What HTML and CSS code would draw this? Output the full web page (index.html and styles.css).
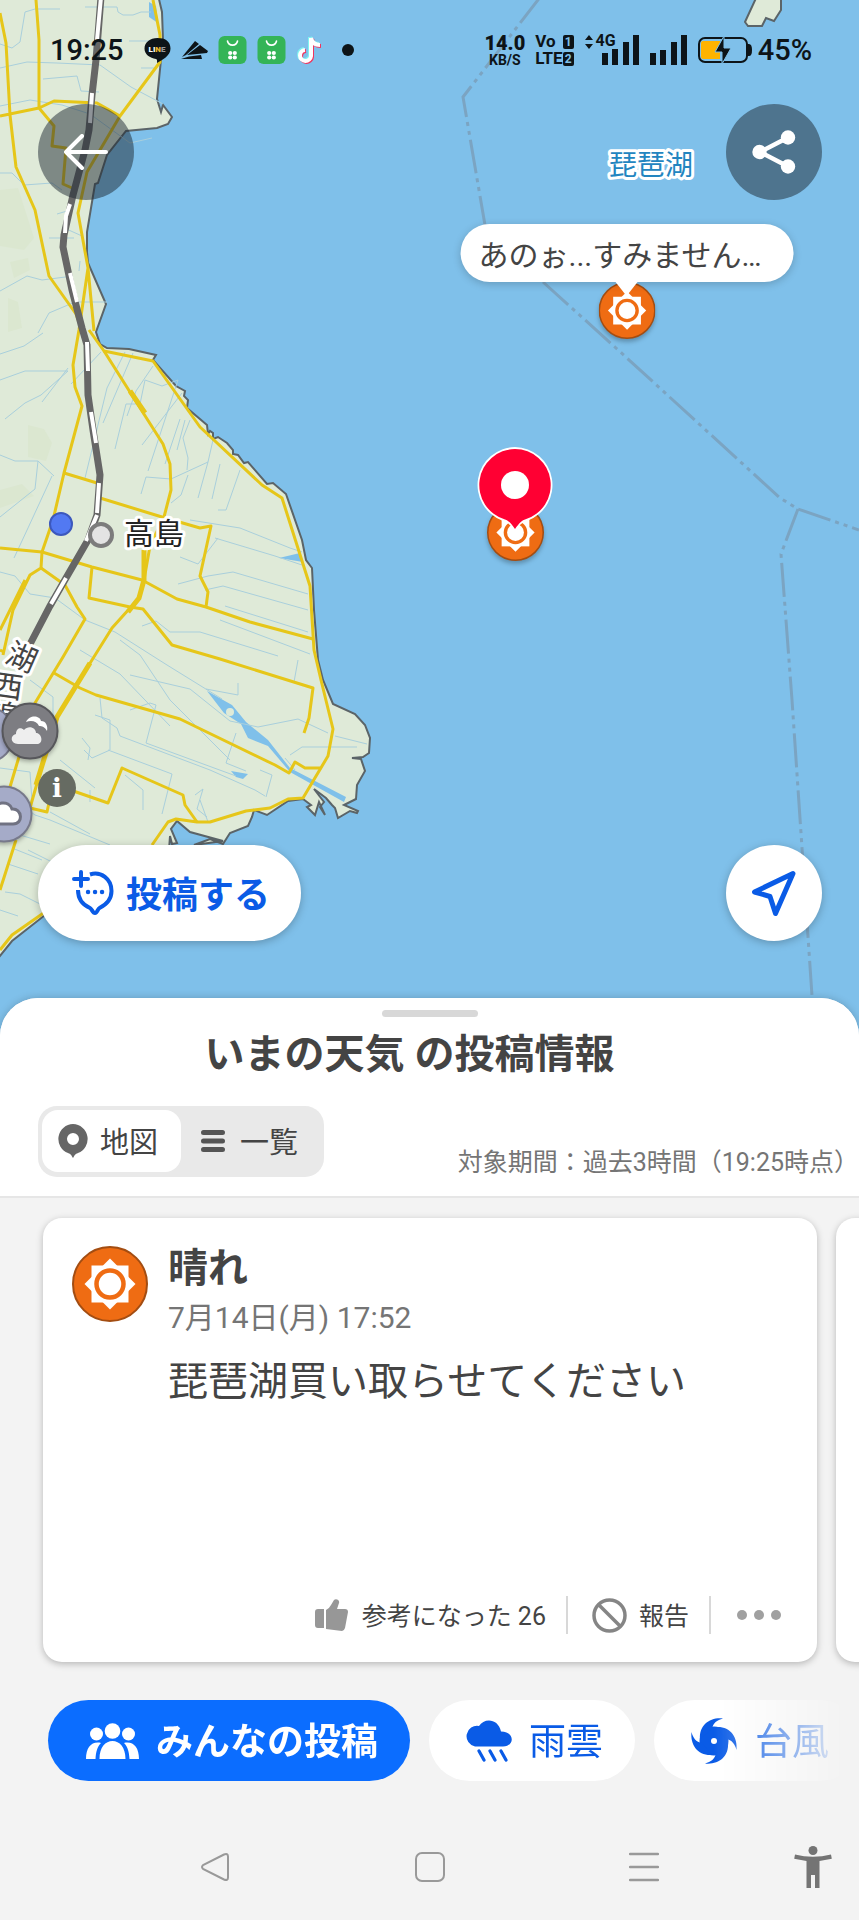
FILE: index.html
```html
<!DOCTYPE html>
<html lang="ja">
<head>
  <meta charset="UTF-8" />
  <meta name="viewport" content="width=device-width, initial-scale=1" />
  <title>いまの天気 の投稿情報</title>
  <link rel="stylesheet" href="styles.css">
</head>
<body>
  <!-- reusable shapes -->
  <svg class="defs" aria-hidden="true">
    <symbol id="sun" viewBox="0 0 76 76">
      <circle cx="38" cy="38" r="37" fill="#ef6c13" stroke="#a34d12" stroke-width="2" />
      <path d="M19.5 19.5h37v37h-37z" fill="#fff" />
      <path d="M38 12.5L63.5 38 38 63.5 12.5 38z" fill="#fff" />
      <circle cx="38" cy="38" r="13.5" fill="#fff" stroke="#ef6c13" stroke-width="4.5" />
    </symbol>
    <symbol id="bag" viewBox="0 0 28 28">
      <rect width="28" height="28" rx="6" fill="#34b457" />
      <path d="M9 5c1 5.500 9 5.500 10 0" fill="none" stroke="#fff" stroke-width="1.6" stroke-linecap="round" />
      <g fill="#fff"><circle cx="11.700" cy="17" r="2.100" /><circle cx="16.300" cy="17" r="2.100" /><circle cx="11.700" cy="21.500" r="2.100" /><circle cx="16.300" cy="21.500" r="2.100" /></g>
    </symbol>
  </svg>

  <main class="map">
    <svg class="map-tiles" viewBox="0 0 859 1040" preserveAspectRatio="xMinYMin slice" aria-hidden="true">
      <rect width="859" height="1040" fill="#7fc0ea" />
      <path class="coast" d="M-5 -5H158L162 12 163 40 157 99 161 112 163 105 172 117 168 124 157 128 126 131 107 155 98 183 95 184 87 232V252L88 263 106 304 96 332 100 344 107 348 129 349 156 355 153 360 176 386 185 391 184 396 188 400 187 408 207 425 208 434 210 431 213 433V439L218 437 227 443 233 450V454L238 455 244 463 248 462 267 484 273 483 286 494 302 540 306 560 312 568 314 610 318 660 323 680 333 704 355 714 365 725 370 738 369 753 363 757 352 758 361 759 365 771 357 785 356 799 344 805 358 811 357 813 350 811 338 818 335 808 332 805 326 798 314 789 324 802 320 807 325 815 319 802 315 815 307 807 311 805 303 799 288 801 267 815 254 810 252 817 248 826 230 833 223 844 210 839 194 845 223 841 190 832 177 821 171 829 177 843 172 844 170 836 169 850 110 884 45 915 12 941 -5 962Z" />
      <path class="coast" d="M757 -4L745 22 748 26H762L766 18 774 21 781 10V-4Z" />
      <path d="M0 190l18-2 16 50-10 12-24-4zM10 262l18-4 2 12-16 8zM8 298l10 4 4 26-14 4zM28 425l16 4 8 14-6 18-18-4zM0 490l22-6 12 12-34 12z" fill="#dbe7d0" />
      <g class="water">
        <path d="M207 691L232 705 246 722 268 740 290 768 346 797 344 802 290 772 268 746 248 738 241 724 224 713Z" />
        <path d="M231 771L248 774 243 779 236 777Z" />
        <path d="M279 558L300 553 303 562Z" />
        <path d="M149 2l7 4 2 17-9-6z" />
      </g>
      <circle cx="230" cy="712" r="4" fill="#dfead8" />
      <g class="stream">
        <path d="M85 7h32l1 5 5 3h10l8-3h10M0 68l27-6 30 1 43 2 31 22 32 17M25 12l-5 30-8 6-12-4M60 9h-25l-10 3M43 79l34-3 4 15 18 1M0 106l30-6 32 5 28 9 40 29 22-5M129 41h28M141 68h14" />
        <path d="M0 173h12l12 12 28-2 10 7M57 214l10-3M62 227l20 9M49 238h25M0 291l27-15 15 4 31-4M80 261l-1 10M38 333l11-20 26-11h32M0 354l24-8 19-13" />
        <path d="M0 380l25-9h43l-27 24-16 8-20 16M68 368l-26 34M101 352l-30 32M125 352l-18 36-22 90M133 353l-30 70M153 366l-17 25-9 25M115 449l11-45h14l5-24 17 6 16-6-30 91M182 393l-40 52M180 419l-15 45M190 420l-7 18 5 20-1 12M177 450l8-30M213 440l-5 22-37 17-25-2-5 17M188 475l-7 20-10 8M208 462l-10 36M220 464l-8 35M240 470l-14 40h-8M0 455l15 6h23l16 15M38 461l-3 28-35 28M52 476l-24 52-14 30" />
        <path d="M190 520l50 8 50 20 12 4M215 538l60 18 30 10M180 557l18 7 20-26M178 584l30-8 25-4 75 22M205 590l18-4 85 24M225 606l83 26M220 620l90 34M142 626l14-5 14 11h30l78 24M120 640l20 15 30 45 60 60M0 572l15 4 15 18 25 4 30 22 30 12 52 33 55 34M80 650l40 24 50 52M130 675l60 14 40 32 28 6 40-8 30 14M206 689l32 6v-12M298 660l-4 22" />
        <path d="M30 680l23 17v30M100 698l2 20 15 10 3 8 90 34 45 20 10 6M130 710l20-7 6 2-10 38 90 33M95 715l15 5v30l-18 8-8-8M82 738l8 10-2 12M108 750l64 24-10 40M125 775l18 15v20M195 795l8-6-6 20 10 8M200 800l8 22M90 790v12M60 760l35 28M236 733l-10 30 20 8M260 770l12 5-6 22M290 755l12-8h55M285 758l10 12M335 736l32 8" />
        <path d="M0 768l30 4 2 30M15 800l20 15 15 5 60 25M50 812l40 22M10 832l40 12M12 848l30 12M8 864l30 10M5 892l15 2 20 10M0 910l18 6M28 850l60 30" />
      </g>
      <g class="road">
        <path d="M0 13L6 43 10 115 16 167 35 210 49 276 76 314 82 330M36 0L39 40V108L0 116M39 108L54 101 97 103 120 116M153 0L160 35V62L120 116 87 172 78 213 88 268 94 331M88 268L79 330 73 365 75 387 82 406 64 473 53 520 42 552 41 568 30 575 13 610 3 655M39 108L54 126 52 146 66 148 63 184 72 188" />
        <path d="M89 330L104 351 153 361 200 427 262 485 282 498 310 586 314 650 321 680 333 729 328 756 303 798 288 799 270 808 246 811 210 822 197 822 176 819 168 822 152 845" />
        <path d="M104 351L142 411 163 444 170 464 171 490 164 517 150 546 144 580 139 598 112 628 92 660 55 720 30 808 47 812 53 784 108 803 122 768 183 795 185 805 197 822" />
        <path d="M64 473L97 483M100 498L162 517 200 528 211 526 200 576 208 592 206 607M0 548L42 552 92 567 142 580 177 599 206 607 250 622 313 639M92 567L89 598 130 607 143 609 172 645 220 659 313 688 309 718 304 733" />
        <path d="M41 568L65 585 77 607 85 619 63 657 35 703 10 787M25 580L0 630M16 840L0 890M0 650L4 652M54 673L80 688 96 695 180 719 275 765 289 773 295 762 305 768H320M45 912L12 935 0 950" />
      </g>
      <path class="road-thick" d="M144 550V580L139 598 128 612M90 663L57 717 36 785M130 391L145 413" />
      <path class="rail" d="M101 -3L96 60 92 95 89 130 85 150 73 195 64 235 63 247 72 290 82 328 87 345 88 395 93 430 100 475 97 515 88 540 66 578 50 606 28 648" />
      <path class="rail-light" d="M101 -3L97 40M92 93L90 123M70 204L66 216 65 233M70 273L77 302M87 342L88 371M91 412L96 443M99 483L97 513M97 515L86 541M66 578L51 604" />
      <path class="border" d="M541 -4L463 97 485 225M543 282L616 348 780 498 798 509 859 530M798 509L781 554 792 700 815 1040" />
      <circle cx="61" cy="524" r="11" fill="#5279f2" stroke="#3c58bd" stroke-width="2" />
      <circle cx="101" cy="535" r="11" fill="#e3e3e3" stroke="#7c7c7c" stroke-width="4" />
      <text class="place" x="124" y="544">高島</text>
      <text class="place lake" x="609" y="175">琵琶湖</text>
      <text class="place line-name" transform="translate(22 657) rotate(24)" x="-15" y="11">湖</text>
      <text class="place line-name" transform="translate(8 686) rotate(8)" x="-15" y="11">西</text>
      <text class="place line-name" transform="translate(3 715) rotate(8)" x="-15" y="11">線</text>
    </svg>

    <button class="pin pin-cloud-back" aria-label="くもり"></button>
    <button class="pin pin-cloud" aria-label="くもり">
      <svg width="58" height="58" viewBox="0 0 58 58">
        <circle cx="29" cy="29" r="27.5" fill="#7d7d82" stroke="#57575b" stroke-width="2" />
        <path d="M25 20c4-8 14-6 15-1 5 0 7 5 6 10-2-4-5-5-8-5-2-5-8-6-13-4z" fill="#fff" />
        <path d="M17 42c-8 0-8-9-2-10 0-6 5-7 8-4 4-5 12-3 12 3 6 0 8 11 1 11z" fill="#eee" />
      </svg>
    </button>
    <button class="pin pin-cloudy" aria-label="くもり">
      <svg width="58" height="58" viewBox="0 0 58 58">
        <circle cx="29" cy="29" r="27.5" fill="#a5abc8" stroke="#77798a" stroke-width="2" />
        <path d="M18 39c-9 0-9-12 0-12 1-11 16-12 19-3 10-1 12 15 1 15z" fill="#fff" stroke="#707282" stroke-width="3" />
      </svg>
    </button>
    <button class="pin pin-info" aria-label="情報">i</button>

    <div class="pin pin-post">
      <button class="callout">あのぉ...すみません…</button>
      <svg class="marker" aria-hidden="true"><use href="#sun" /></svg>
    </div>
    <button class="pin pin-selected" aria-label="晴れ">
      <svg class="marker" aria-hidden="true"><use href="#sun" /></svg>
      <svg class="drop" width="76" height="84" viewBox="0 0 76 84">
        <path d="M38 0a38 38 0 0 1 13 73.500c-6 2-8 4-13 10.500-5-6.500-7-8.500-13-10.500A38 38 0 0 1 38 0z" fill="#fff" />
        <path d="M38 2a36 36 0 0 1 10 70.500c-4 1.500-6 4-10 9.500-4-5.500-6-8-10-9.500A36 36 0 0 1 38 2z" fill="#ff0033" />
        <circle cx="38" cy="38" r="14" fill="#fff" />
      </svg>
    </button>

    <header class="map-top">
      <div class="status">
        <div class="status-left">
          <span class="time">19:25</span>
          <svg width="27" height="28" viewBox="0 0 27 28">
            <path d="M13.500 2C6 2 .5 6.500.5 12.500S6 22 12 23c1.500.5 1 2 1 4 5-3 13.500-7 13.500-14.500S21 2 13.500 2z" fill="#0d1418" />
            <text class="line-logo" x="13" y="16" text-anchor="middle">LI<tspan fill="#e9b52b">N</tspan><tspan fill="#999">E</tspan></text>
          </svg>
          <svg width="27" height="28" viewBox="0 0 27 28">
            <path d="M1 21L14 5l4 3L5 19zM6 19L19 9l8 6-1 2zM0 23l8-2.500 12-1.500 1 4z" fill="#0d1418" />
          </svg>
          <svg width="29" height="28"><use href="#bag" /></svg>
          <svg width="29" height="28"><use href="#bag" /></svg>
          <svg class="tiktok" width="26" height="28" viewBox="0 0 26 28" fill="none" stroke-width="4">
            <path d="M15 2v18a5.500 5.500 0 1 1-6-6M15 2c1 5 4 7 9 7" stroke="#f0365f" transform="translate(1 1)" />
            <path d="M15 2v18a5.500 5.500 0 1 1-6-6M15 2c1 5 4 7 9 7" stroke="#7ff3f0" transform="translate(-1 -1)" />
            <path d="M15 2v18a5.500 5.500 0 1 1-6-6M15 2c1 5 4 7 9 7" stroke="#fff" />
          </svg>
          <span class="dot"></span>
        </div>
        <div class="status-right">
          <span class="speed"><b>14.0</b><small>KB/S</small></span>
          <span class="volte"><span>Vo <i>1</i></span><span>LTE<i>2</i></span></span>
          <span class="signal">
            <svg width="10" height="14" viewBox="0 0 10 14"><path d="M5 0l4 5H1zM5 14l4-5H1z" /></svg>
            <span class="net">4G</span>
            <svg width="38" height="30" viewBox="0 0 38 30"><path d="M0 18h6v12H0zM10 14h6v16h-6zM21 7h6v23h-6zM31 0h6v30h-6z" /></svg>
          </span>
          <svg width="38" height="30" viewBox="0 0 38 30"><path d="M0 18h6v12H0zM10 15h6v15h-6zM21 7h6v23h-6zM31 0h6v30h-6z" /></svg>
          <svg width="54" height="30" viewBox="0 0 54 30">
            <rect x="1" y="3" width="48" height="24" rx="6" fill="none" stroke="#0d1418" stroke-width="2" />
            <path d="M5 6h17v18H5a2 2 0 0 1-2-2V8a2 2 0 0 1 2-2z" fill="#ffb300" />
            <path d="M50 9h1q3 0 3 6t-3 6h-1z" />
            <path d="M26 1L17 17h7v12l9-16h-7z" stroke="#7fc0ea" stroke-width="1" />
          </svg>
          <span class="time">45%</span>
        </div>
      </div>
      <div class="toolbar">
        <button class="round dark" aria-label="戻る">
          <svg width="44" height="36" viewBox="0 0 44 36" fill="none" stroke="#fff" stroke-width="4" stroke-linecap="round" stroke-linejoin="round"><path d="M42 18H2M18 2L2 18l16 16" /></svg>
        </button>
        <button class="round dark" aria-label="共有">
          <svg width="44" height="44" viewBox="0 0 44 44"><path d="M36 7.500L8 22l28 14.500" fill="none" stroke="#fff" stroke-width="4.5" /><g fill="#fff"><circle cx="36" cy="7.5" r="7.2" /><circle cx="7.5" cy="22" r="7.2" /><circle cx="36" cy="36.5" r="7.2" /></g></svg>
        </button>
      </div>
    </header>

    <div class="map-bottom">
      <button class="post">
        <svg width="42" height="46" viewBox="0 0 42 46" fill="none" stroke="#0a5be6" stroke-width="4" stroke-linecap="round" stroke-linejoin="round">
          <path d="M9 2v14M2 9h14" />
          <path stroke-linecap="butt" d="M18 4.500C29 1 39.500 9 39.500 21c0 9-6 14-12 17-2 1-2 5-4.500 5s-3-4-5-5C11 35 6 30 6 20" />
          <path stroke-width="4.4" d="M16 22h.1M23 22h.1M30 22h.1" />
        </svg>
        <span>投稿する</span>
      </button>
      <button class="round light" aria-label="現在地">
        <svg width="46" height="46" viewBox="0 0 46 46"><path d="M3.500 22L42 3.500 24.500 43.500 19 26.500z" fill="none" stroke="#0a5be6" stroke-width="5" stroke-linejoin="round" /></svg>
      </button>
    </div>
  </main>

  <section class="sheet">
    <div class="sheet-head">
      <div class="handle"></div>
      <h1>いまの天気 の投稿情報</h1>
      <div class="sheet-tools">
        <div class="toggle">
          <button class="active">
            <svg width="30" height="34" viewBox="0 0 30 34"><path fill-rule="evenodd" d="M15 0a15 15 0 0 1 5 29c-3 1-3 2-5 5-2-3-2-4-5-5A15 15 0 0 1 15 0zm0 9a6 6 0 1 0 0 12 6 6 0 0 0 0-12z" fill="#666" /></svg>
            <span>地図</span>
          </button>
          <button>
            <svg width="24" height="22" viewBox="0 0 24 22"><path d="M2.500 2.500h19M2.500 11h19M2.500 19.500h19" stroke="#555" stroke-width="5" stroke-linecap="round" /></svg>
            <span>一覧</span>
          </button>
        </div>
        <p class="period">対象期間：過去3時間（19:25時点）</p>
      </div>
    </div>

    <div class="cards">
      <article class="card">
        <div class="card-main">
          <svg class="card-icon" aria-hidden="true"><use href="#sun" /></svg>
          <div>
            <h2>晴れ</h2>
            <time>7月14日(月) 17:52</time>
            <p>琵琶湖買い取らせてください</p>
          </div>
        </div>
        <div class="card-actions">
          <button class="like">
            <svg width="33" height="32" viewBox="0 0 33 32" fill="#979797"><path d="M3 10h6v19H3q-3 0-3-3V13q0-3 3-3zM11 11q3-1 5-5l3-5c2-2 6 0 5 3l-2 6h8q3 0 3 3l-3 16q-1 3-3 3l-16-2z" /></svg>
            <span>参考になった 26</span>
          </button>
          <button class="report">
            <svg width="35" height="35" viewBox="0 0 35 35" fill="none" stroke="#858585" stroke-width="3.5"><circle cx="17.5" cy="17.5" r="15.5" /><path d="M6.500 6.500l22 22" /></svg>
            <span>報告</span>
          </button>
          <button class="more" aria-label="その他">
            <svg width="44" height="10" viewBox="0 0 44 10" fill="#a0a0a0"><circle cx="5" cy="5" r="5" /><circle cx="22" cy="5" r="5" /><circle cx="39" cy="5" r="5" /></svg>
          </button>
        </div>
      </article>
      <article class="card"></article>
    </div>

    <div class="chips">
      <button class="chip selected">
        <svg width="53" height="36" viewBox="0 0 53 36" fill="#fff">
          <circle cx="26.5" cy="8" r="7.8" /><circle cx="10.5" cy="11" r="6.5" /><circle cx="42.5" cy="11" r="6.5" />
          <path d="M13.500 36c0-12 6-18 13-18s13 6 13 18zM0 36c0-12 6-18 15-16-4 4-5 9-5.500 16zM53 36c0-12-6-18-15-16 4 4 5 9 5.500 16z" />
        </svg>
        <span>みんなの投稿</span>
      </button>
      <button class="chip">
        <svg width="47" height="42" viewBox="0 0 47 42">
          <path d="M10 26.500a10 10 0 1 1 4-20.500c5-8 19-8 22 5.500 14 0 14 15 2 15z" fill="#0a5be6" />
          <path d="M14 31l5 9M25 31l5 9M36 31l5 9" stroke="#0a5be6" stroke-width="3.2" stroke-linecap="round" />
        </svg>
        <span>雨雲</span>
      </button>
      <button class="chip">
        <svg width="48" height="48" viewBox="0 0 48 48">
          <g fill="#0a5be6">
            <circle cx="24" cy="24" r="14.5" />
            <path id="arm" d="M10 22C9 8 20 0 33 1.500 27 3 23 6 22 12z" />
            <use href="#arm" transform="rotate(90 24 24)" />
            <use href="#arm" transform="rotate(180 24 24)" />
            <use href="#arm" transform="rotate(270 24 24)" />
          </g>
          <circle cx="24" cy="24" r="3" fill="#fff" />
        </svg>
        <span>台風</span>
      </button>
    </div>

    <nav class="nav" aria-label="ナビゲーション">
      <span></span>
      <button aria-label="戻る"><svg width="28" height="28" viewBox="0 0 28 28" fill="none" stroke="#999" stroke-width="2"><path d="M2 12.200L23 1.500q4-1.500 4 2v21q0 3.500-4 2L2 15.800q-2-1.800 0-3.600z" /></svg></button>
      <button aria-label="ホーム"><svg width="30" height="30" viewBox="0 0 30 30"><rect x="1" y="1" width="28" height="28" rx="6" fill="none" stroke="#999" stroke-width="2" /></svg></button>
      <button aria-label="履歴"><svg width="30" height="30" viewBox="0 0 30 30"><path d="M1 2h28M1 15h28M1 28h28" stroke="#999" stroke-width="2.5" stroke-linecap="round" /></svg></button>
      <button class="access" aria-label="ユーザー補助"><svg width="38" height="42" viewBox="0 0 38 42" fill="#747474"><circle cx="19" cy="4.5" r="4.5" /><path d="M1 8.500q18 4.500 36 0l.8 4.200L25.500 15v27H21V29h-4v13h-4.500V15L.2 12.700z" /></svg></button>
    </nav>
  </section>
</body>
</html>
```
FILE: styles.css
```css
* {
  box-sizing: border-box;
}

body {
  margin: 0;
  min-height: 100vh;
  display: flex;
  flex-direction: column;
  background: #f3f3f3;
  color: #444;
  font-family: Roboto, "Noto Sans CJK JP", sans-serif;
  overflow-x: hidden;
}

button {
  display: flex;
  align-items: center;
  justify-content: center;
  margin: 0;
  padding: 0;
  border: none;
  background: none;
  color: inherit;
  font: inherit;
  white-space: nowrap;
  cursor: pointer;
}

button span {
  padding-bottom: 3px;
}

svg {
  display: block;
  flex: none;
}

.defs {
  position: absolute;
  width: 0;
  height: 0;
}

/* map */
.map {
  position: relative;
  flex: 1;
  min-height: 800px;
  display: flex;
  flex-direction: column;
  justify-content: space-between;
  padding-bottom: 99px;
  overflow: hidden;
}

.map-tiles {
  position: absolute;
  inset: 0;
  width: 100%;
  height: 100%;
}

.coast {
  fill: #dfead8;
  stroke: #5b6468;
  stroke-width: 2;
}

.water {
  fill: #7fc0ea;
}

.stream,
.road,
.road-thick,
.rail,
.rail-light,
.border {
  fill: none;
}

.stream {
  stroke: #a9cfdc;
  stroke-width: 1;
}

.road {
  stroke: #e6c619;
  stroke-width: 3;
  stroke-linejoin: round;
}

.road-thick {
  stroke: #e6c619;
  stroke-width: 5;
}

.rail {
  stroke: #666;
  stroke-width: 7;
}

.rail-light {
  stroke: #fff;
  stroke-width: 4;
}

.border {
  stroke: #7ba4c2;
  stroke-width: 3;
  stroke-dasharray: 34 5 4 5 4 5;
}

.place {
  font-size: 30px;
  fill: #222;
  stroke: #fff;
  stroke-width: 6;
  stroke-linejoin: round;
  paint-order: stroke;
}

.lake {
  font-size: 28px;
  fill: #2385c0;
}

.line-name {
  fill: #444;
}

/* pins */
.pin {
  position: absolute;
}

.pin-cloud {
  left: 1px;
  top: 702px;
  filter: drop-shadow(0 2px 2px rgba(0, 0, 0, 0.3));
}

.pin-cloud-back {
  left: -42px;
  top: 706px;
  width: 57px;
  height: 57px;
  border: 2px solid #77798a;
  border-radius: 50%;
  background: #a5abc8;
}

.pin-cloudy {
  left: -25px;
  top: 785px;
  filter: drop-shadow(0 2px 2px rgba(0, 0, 0, 0.3));
}

.pin-info {
  left: 38px;
  top: 769px;
  width: 38px;
  height: 38px;
  border-radius: 50%;
  background: #666b62;
  color: #fff;
  font: bold 26px "DejaVu Serif", serif;
}

.pin-post {
  left: 627px;
  top: 224px;
  display: flex;
  flex-direction: column;
  align-items: center;
  transform: translateX(-50%);
}

.marker {
  width: 57px;
  height: 57px;
  filter: drop-shadow(0 3px 2px rgba(0, 0, 0, 0.25));
}

.callout {
  position: relative;
  z-index: 1;
  height: 58px;
  padding: 0 32px 0 18px;
  border-radius: 29px;
  background: #fff;
  font-size: 30px;
  box-shadow: 0 2px 8px rgba(0, 0, 0, 0.2);
}

.callout::after {
  content: "";
  position: absolute;
  top: 100%;
  left: 50%;
  margin-left: -11px;
  border: 11px solid transparent;
  border-top: 14px solid #fff;
  border-bottom: none;
}

.pin-selected {
  left: 477px;
  top: 447px;
  width: 76px;
  height: 114px;
  align-items: flex-end;
}

.drop {
  position: absolute;
  top: 0;
  left: 0;
}

/* status bar and buttons over the map */
.map-top,
.map-bottom {
  position: relative;
}

.status,
.status-left,
.status-right {
  display: flex;
  align-items: center;
}

.status {
  height: 100px;
  padding: 0 47px 0 50px;
  justify-content: space-between;
  color: #0d1418;
  fill: #0d1418;
}

.status-left {
  gap: 10px;
}

.status-left .time {
  margin-right: 10px;
}

.time {
  font-size: 29px;
  font-weight: 500;
}

.line-logo {
  fill: #fff;
  font-size: 8px;
  font-weight: 900;
}

.tiktok {
  margin-right: 10px;
}

.dot {
  width: 12px;
  height: 12px;
  border-radius: 50%;
  background: #0d1418;
}

.status-right {
  gap: 10px;
}

.status-right .time {
  margin-left: -4px;
}

.speed,
.volte {
  display: flex;
  flex-direction: column;
  align-items: center;
  font-weight: 700;
}

.speed b {
  font-size: 20px;
  line-height: 20px;
}

.speed small {
  font-size: 14px;
  line-height: 14px;
}

.volte {
  align-items: stretch;
  font-size: 17px;
  line-height: 17px;
}

.volte > span {
  display: flex;
  align-items: center;
  justify-content: space-between;
}

.volte i {
  padding: 0 2px;
  border-radius: 2px;
  background: #0d1418;
  color: #7fc0ea;
  font-size: 12px;
  font-style: normal;
  line-height: 14px;
}

.signal {
  display: flex;
  align-items: flex-start;
}

.net {
  margin: 0 -14px 0 2px;
  font-size: 16px;
  font-weight: 700;
  line-height: 12px;
}

.toolbar,
.map-bottom {
  display: flex;
  justify-content: space-between;
  padding: 0 37px 0 38px;
}

.toolbar {
  padding-top: 4px;
}

.round {
  width: 96px;
  height: 96px;
  border-radius: 50%;
}

.dark {
  background: rgba(30, 40, 50, 0.5);
}

.light,
.post {
  background: #fff;
  box-shadow: 0 2px 8px rgba(0, 0, 0, 0.25);
}

.post {
  height: 96px;
  padding: 0 31px 0 34px;
  gap: 12px;
  border-radius: 48px;
  color: #0a5be6;
  font-size: 36px;
  font-weight: 700;
}

/* bottom sheet */
.sheet {
  position: relative;
  margin-top: -42px;
  border-radius: 38px 38px 0 0;
  background: #f3f3f3;
  box-shadow: 0 0 8px rgba(0, 0, 0, 0.2);
}

.sheet-head {
  padding: 12px 0 19px;
  border-bottom: 2px solid #e6e6e6;
  border-radius: 38px 38px 0 0;
  background: #fff;
}

.handle {
  width: 96px;
  height: 7px;
  margin: 0 auto;
  border-radius: 4px;
  background: #d8d8d8;
}

h1 {
  margin: 14px 0 27px;
  padding: 0 40px 0 0;
  font-size: 40px;
  font-weight: 700;
  line-height: 48px;
  text-align: center;
}

.sheet-tools {
  display: flex;
  justify-content: space-between;
  align-items: flex-end;
  padding-left: 38px;
}

.toggle {
  display: flex;
  padding: 4px 4px 5px;
  border-radius: 19px;
  background: #e9e9e9;
  font-size: 29px;
}

.toggle button {
  height: 62px;
  padding: 0 22px 0 20px;
  gap: 15px;
}

.toggle .active {
  padding: 0 23px 0 16px;
  gap: 12px;
  border-radius: 16px;
  background: #fff;
}

.period {
  margin: 0;
  color: #757575;
  font-size: 25px;
  line-height: 28px;
  white-space: nowrap;
}

/* posts */
.cards {
  display: flex;
  gap: 19px;
  padding: 20px 42px 20px 43px;
  overflow: hidden;
}

.card {
  flex: 0 0 100%;
  min-height: 444px;
  display: flex;
  flex-direction: column;
  justify-content: space-between;
  padding: 28px 36px 28px 29px;
  border-radius: 19px;
  background: #fff;
  box-shadow: 0 2px 7px rgba(0, 0, 0, 0.25);
}

.card-main {
  display: flex;
  gap: 20px;
}

.card-icon {
  width: 76px;
  height: 76px;
}

h2 {
  margin: 0 0 8px;
  font-size: 40px;
  font-weight: 700;
  line-height: 46px;
}

time {
  display: block;
  color: #757575;
  font-size: 30px;
  line-height: 36px;
}

.card p {
  margin: 22px 0 0;
  font-size: 40px;
  line-height: 48px;
}

.card-actions {
  display: flex;
  justify-content: flex-end;
  font-size: 25px;
}

.card-actions button {
  height: 38px;
  gap: 14px;
}

.card-actions .like,
.card-actions .report {
  padding-right: 20px;
  border-right: 2px solid #d8d8d8;
}

.card-actions .report {
  padding-left: 24px;
  gap: 12px;
}

.card-actions .more {
  padding-left: 26px;
}

/* mode chips, faded at the right edge */
.chips {
  display: flex;
  gap: 19px;
  padding: 18px 0 0 48px;
  overflow: hidden;
  -webkit-mask-image: linear-gradient(to left, transparent 10px, #000 145px);
  mask-image: linear-gradient(to left, transparent 10px, #000 145px);
}

.chip {
  flex: none;
  height: 81px;
  padding: 0 32px 0 36px;
  gap: 17px;
  border-radius: 41px;
  background: #fff;
  color: #0a5be6;
  font-size: 37px;
}

.selected {
  padding-left: 38px;
  background: #0b6dff;
  color: #fff;
  font-weight: 700;
}

/* system navigation */
.nav {
  display: grid;
  grid-template-columns: 1fr 2fr 2fr 2fr 1fr;
  height: 106px;
  margin-top: 33px;
}

.access {
  justify-content: flex-end;
  padding-right: 27px;
}
```
